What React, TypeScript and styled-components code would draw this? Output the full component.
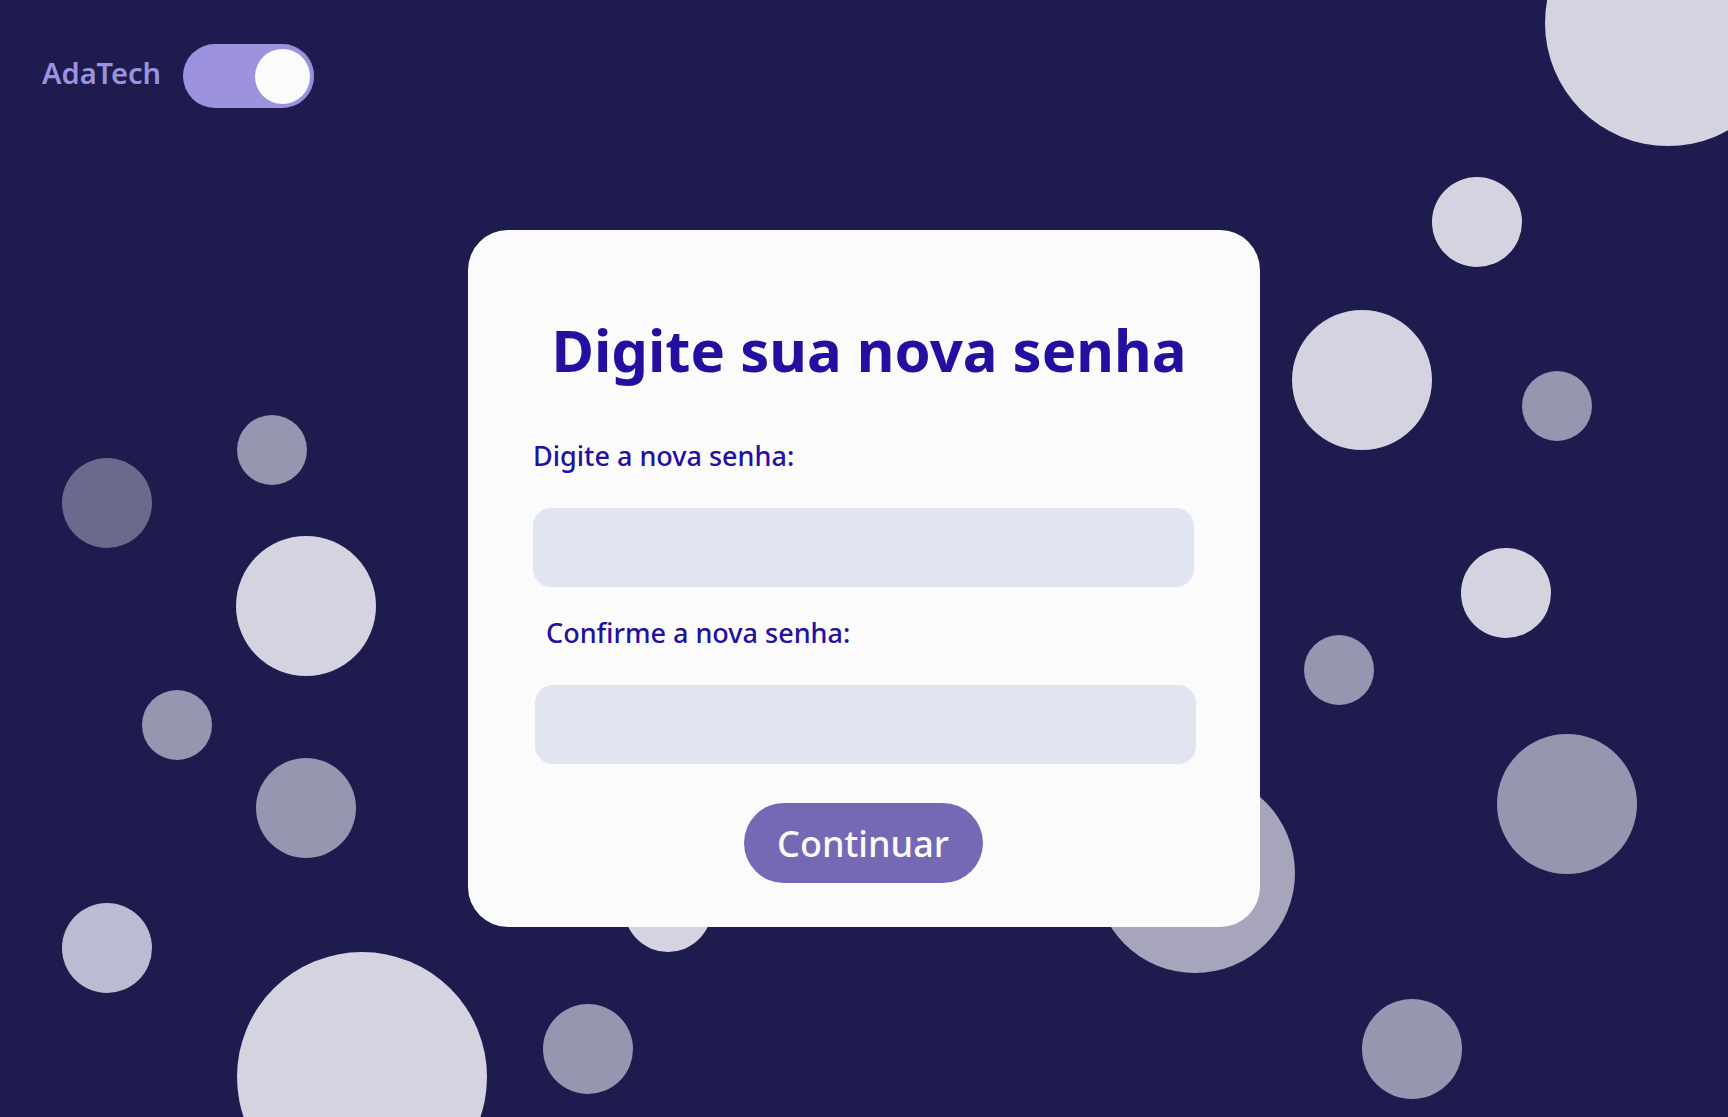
import React, { useState } from "react";
import styled, { createGlobalStyle } from "styled-components";

type Bubble = { x: number; y: number; r: number; fill: string };

const LIGHT = "#d4d3df";
const MEDIUM = "#9596b0";

const bubbles: Array<Bubble> = [
  { x: 1668, y: 23, r: 123, fill: LIGHT },
  { x: 1477, y: 222, r: 45, fill: LIGHT },
  { x: 1362, y: 380, r: 70, fill: LIGHT },
  { x: 1557, y: 406, r: 35, fill: MEDIUM },
  { x: 1506, y: 593, r: 45, fill: LIGHT },
  { x: 1339, y: 670, r: 35, fill: MEDIUM },
  { x: 1567, y: 804, r: 70, fill: MEDIUM },
  { x: 1195, y: 873, r: 100, fill: "#a7a5bb" },
  { x: 1412, y: 1049, r: 50, fill: MEDIUM },
  { x: 668, y: 908, r: 44, fill: LIGHT },
  { x: 588, y: 1049, r: 45, fill: MEDIUM },
  { x: 362, y: 1077, r: 125, fill: LIGHT },
  { x: 107, y: 948, r: 45, fill: "#bbbcd3" },
  { x: 306, y: 808, r: 50, fill: MEDIUM },
  { x: 177, y: 725, r: 35, fill: MEDIUM },
  { x: 306, y: 606, r: 70, fill: LIGHT },
  { x: 107, y: 503, r: 45, fill: "#6c6a8c" },
  { x: 272, y: 450, r: 35, fill: MEDIUM },
];

const GlobalStyle = createGlobalStyle`
  * { box-sizing: border-box; }
  html, body {
    margin: 0;
    padding: 0;
    background: #1e1b4e;
    font-family: "Noto Sans", "Open Sans", sans-serif;
  }
`;

const Page = styled.div`
  position: relative;
  width: 100%;
  height: 100vh;
  overflow: hidden;
  background-color: #1e1b4e;
`;

const BubbleLayer = styled.svg`
  position: absolute;
  inset: 0;
  width: 100%;
  height: 100%;
  z-index: 0;
`;

const Header = styled.header`
  position: relative;
  z-index: 1;
  display: flex;
  align-items: center;
  gap: 22px;
  padding: 44px 0 0 42px;
`;

const Brand = styled.span`
  margin-bottom: 8px;
  font-size: 29px;
  font-weight: 600;
  line-height: 1;
  color: #9d92de;
`;

const ToggleTrack = styled.button<{ $on: boolean }>`
  display: flex;
  align-items: center;
  justify-content: ${({ $on }) => ($on ? "flex-end" : "flex-start")};
  width: 131px;
  height: 64px;
  padding: 0 4px;
  border: none;
  border-radius: 32px;
  background-color: #9d92de;
  box-shadow: inset -2px 0 0 #9287d8;
  cursor: pointer;
`;

const ToggleKnob = styled.span`
  display: block;
  width: 55px;
  height: 55px;
  border-radius: 50%;
  background-color: #fbfbfb;
`;

const Main = styled.main`
  position: relative;
  z-index: 1;
  display: flex;
  justify-content: center;
  padding-top: 122px;
`;

const Card = styled.form`
  display: flex;
  flex-direction: column;
  width: 792px;
  padding: 91px 67px 44px 65px;
  border-radius: 40px;
  background-color: #fbfbfb;
`;

const Title = styled.h1`
  margin: 0 0 63px;
  padding-left: 12px;
  font-size: 58px;
  font-weight: 700;
  line-height: 1;
  text-align: center;
  white-space: nowrap;
  color: #2310a0;
`;

const Label = styled.label<{ $indent?: number }>`
  display: block;
  margin: 0 0 39px ${({ $indent }) => $indent ?? 0}px;
  font-size: 27px;
  font-weight: 500;
  line-height: 1;
  color: #2310a0;
`;

const Input = styled.input<{ $gap: number; $shift?: number }>`
  display: block;
  width: 661px;
  height: 79px;
  margin: 0 0 ${({ $gap }) => $gap}px ${({ $shift }) => $shift ?? 0}px;
  padding: 0 20px;
  border: none;
  border-radius: 18px;
  outline: none;
  background-color: #e1e5f2;
  font-family: inherit;
  font-size: 24px;
  color: #2310a0;
`;

const Submit = styled.button`
  align-self: center;
  width: 239px;
  height: 80px;
  border: none;
  border-radius: 40px;
  background-color: #7569b6;
  font-family: inherit;
  font-size: 36px;
  font-weight: 500;
  color: #fbfbfb;
  cursor: pointer;
`;

export default function App() {
  const [dark, setDark] = useState(true);
  const [password, setPassword] = useState("");
  const [confirm, setConfirm] = useState("");

  return (
    <Page>
      <GlobalStyle />
      <BubbleLayer viewBox="0 0 1728 1117" preserveAspectRatio="xMidYMid slice">
        {bubbles.map((b, i) => (
          <circle key={i} cx={b.x} cy={b.y} r={b.r} fill={b.fill} />
        ))}
      </BubbleLayer>

      <Header>
        <Brand>AdaTech</Brand>
        <ToggleTrack
          type="button"
          role="switch"
          aria-checked={dark}
          $on={dark}
          onClick={() => setDark(!dark)}
        >
          <ToggleKnob />
        </ToggleTrack>
      </Header>

      <Main>
        <Card onSubmit={(e) => e.preventDefault()}>
          <Title>Digite sua nova senha</Title>
          <Label htmlFor="nova">Digite a nova senha:</Label>
          <Input
            id="nova"
            type="password"
            $gap={32}
            value={password}
            onChange={(e) => setPassword(e.target.value)}
          />
          <Label htmlFor="confirma" $indent={13}>
            Confirme a nova senha:
          </Label>
          <Input
            id="confirma"
            type="password"
            $gap={39}
            $shift={2}
            value={confirm}
            onChange={(e) => setConfirm(e.target.value)}
          />
          <Submit type="submit">Continuar</Submit>
        </Card>
      </Main>
    </Page>
  );
}
